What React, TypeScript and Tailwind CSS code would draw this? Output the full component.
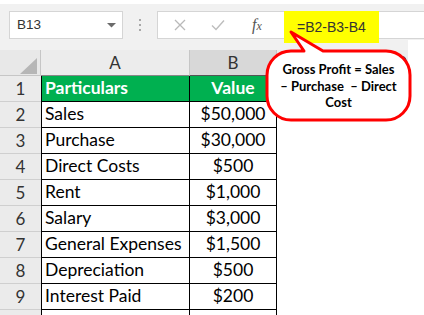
import React from "react";

const rows: [string, string][] = [
  ["Sales", "$50,000"],
  ["Purchase", "$30,000"],
  ["Direct Costs", "$500"],
  ["Rent", "$1,000"],
  ["Salary", "$3,000"],
  ["General Expenses", "$1,500"],
  ["Depreciation", "$500"],
  ["Interest Paid", "$200"],
];

export default function App() {
  return (
    <div className="relative w-[424px] h-[315px] overflow-hidden bg-white font-[Lato,sans-serif]">
      {/* top white strip */}
      <div className="h-[4px] bg-white" />
      {/* formula bar */}
      <div className="h-[36px] bg-[#f1f1f1] flex items-start pt-[7px]">
        <div className="ml-[9px] w-[114px] h-[28px] bg-white border border-[#d5d5d5] flex items-center pl-[7px] pr-[6px]">
          <span className="font-['Liberation_Sans'] text-[13.5px] text-[#333] flex-1">B13</span>
          <svg width="9" height="5" viewBox="0 0 9 5">
            <path d="M0 0 L9 0 L4.5 4.5 Z" fill="#6b6b6b" />
          </svg>
        </div>
        <div className="ml-[16px] mt-[8px] flex flex-col gap-[3px]">
          <div className="w-[2px] h-[2px] bg-[#a8a8a8]" />
          <div className="w-[2px] h-[2px] bg-[#a8a8a8]" />
          <div className="w-[2px] h-[2px] bg-[#a8a8a8]" />
        </div>
        <div className="ml-[16px] flex-1 h-[28px] bg-white border border-r-0 border-[#d5d5d5] flex items-start">
          <div className="w-[125px] h-[26px] flex items-center relative">
            <svg className="ml-[16px]" width="12" height="12" viewBox="0 0 12 12">
              <path d="M1 1 L11 11 M11 1 L1 11" stroke="#b9b9b9" strokeWidth="1.3" />
            </svg>
            <svg className="ml-[25px]" width="14" height="12" viewBox="0 0 14 12">
              <path d="M1 6.5 L5 10.5 L13 1.5" stroke="#bdbdbd" strokeWidth="1.4" fill="none" />
            </svg>
            <span className="ml-[27px] font-['Liberation_Serif'] italic text-[#555]">
              <span className="text-[16px]">f</span>
              <span className="text-[12px]">x</span>
            </span>
          </div>
          <div className="relative ml-[1px] -mt-[1px] w-[95px] h-[32px] bg-[#ffff00] flex items-start pt-[6px] pl-[13px]">
            <span className="font-['Liberation_Sans'] text-[14px] text-[#333]">=B2-B3-B4</span>
          </div>
        </div>
      </div>
      <div className="h-[10px] flex">
        <div className="w-[408px] bg-[#f1f1f1]" />
        <div className="flex-1 bg-white" />
      </div>
      {/* column header row */}
      <div className="h-[26px] flex text-[17px] text-[#333]">
        <div className="w-[41px] shrink-0 bg-[#e8e8e8] border-r border-b border-[#c6c6c6] flex items-end justify-end pr-[3px] pb-[1px]">
          <svg width="17" height="16" viewBox="0 0 17 16">
            <path d="M17 0 L17 16 L0 16 Z" fill="#b6b6b6" />
          </svg>
        </div>
        <div className="w-[149px] shrink-0 bg-[#ececec] border-r border-b border-[#c6c6c6] border-b-[#888] flex items-center justify-center">
          A
        </div>
        <div className="w-[87px] shrink-0 bg-[#d8d8d8] border-r border-b border-[#c6c6c6] border-b-[#555] flex items-center justify-center">
          B
        </div>
        <div className="w-[131px] shrink-0 bg-[#ececec] border-b border-[#c6c6c6]" />
        <div className="flex-1 bg-white" />
      </div>
      {/* header data row */}
      <div className="h-[26px] flex text-[17.5px]">
        <div className="w-[41px] shrink-0 bg-[#ebebeb] border-b border-[#cfcfcf] flex items-center justify-center text-[17px] text-[#333]">
          1
        </div>
        <div className="w-[149px] shrink-0 bg-[#00b050] border-l border-r border-b border-black flex items-center pl-[3px] font-bold text-white">
          Particulars
        </div>
        <div className="w-[87px] shrink-0 bg-[#00b050] border-r border-b border-black flex items-center justify-center font-bold text-white">
          Value
        </div>
        <div className="flex-1" />
      </div>
      {rows.map(([name, value], i) => (
        <div key={name} className="h-[26px] flex text-[17.5px] text-black">
          <div className="w-[41px] shrink-0 bg-[#ebebeb] border-b border-[#cfcfcf] flex items-center justify-center text-[17px] text-[#333]">
            {i + 2}
          </div>
          <div className="w-[149px] shrink-0 border-l border-r border-b border-black flex items-center pl-[3px]">
            {name}
          </div>
          <div className="w-[87px] shrink-0 border-r border-b border-black flex items-center justify-center">
            {value}
          </div>
          <div className="flex-1" />
        </div>
      ))}
      <div className="h-[26px] flex">
        <div className="w-[41px] shrink-0 bg-[#ebebeb]" />
        <div className="w-[149px] shrink-0 border-l border-r border-black" />
        <div className="w-[87px] shrink-0 border-r border-black" />
      </div>

      {/* callout */}
      <svg className="absolute left-0 top-0 pointer-events-none" width="424" height="315" viewBox="0 0 424 315">
        <path d="M403 57 Q409 61 403 66" stroke="#2b4566" strokeWidth="2.2" fill="none" />
        <path
          d="M304 51 L291 32 L323 51 L386 51 A24 24 0 0 1 410 75 L410 96 A24 24 0 0 1 386 120 L291 120 A24 24 0 0 1 267 96 L267 75 A24 24 0 0 1 291 51 Z"
          fill="#ffffff"
          stroke="#ff0000"
          strokeWidth="3"
          strokeLinejoin="round"
        />
      </svg>
      <div className="absolute left-[267px] top-[61px] w-[143px] text-center font-bold text-[13px] leading-[16.5px] text-black">
        <div>Gross Profit = Sales</div>
        <div>– Purchase&nbsp; – Direct</div>
        <div>Cost</div>
      </div>
    </div>
  );
}
